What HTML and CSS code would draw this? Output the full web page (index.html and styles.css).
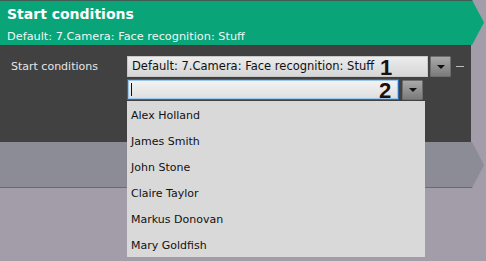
FILE: index.html
```html
<!DOCTYPE html>
<html lang="en">
<head>
  <meta charset="UTF-8">
  <title>Start conditions</title>
  <link rel="stylesheet" href="styles.css">
</head>
<body>
  <div class="header">
    <div class="title">Start conditions</div>
    <div class="subtitle">Default: 7.Camera: Face recognition: Stuff</div>
  </div>

  <div class="panel">
    <div class="row">
      <span class="label">Start conditions</span>
      <div class="combo combo-main">Default: 7.Camera: Face recognition: Stuff</div>
      <button class="drop"><span class="tri"></span></button>
      <span class="dash"></span>
      <span class="mark mark-1">1</span>
    </div>
    <div class="row row-edit">
      <div class="combo combo-edit"><span class="caret"></span></div>
      <button class="drop drop-edit"><span class="tri"></span></button>
      <span class="mark mark-2">2</span>
    </div>

    <ul class="list">
      <li>Alex Holland</li>
      <li>James Smith</li>
      <li>John Stone</li>
      <li>Claire Taylor</li>
      <li>Markus Donovan</li>
      <li>Mary Goldfish</li>
    </ul>
  </div>

  <div class="next"></div>
</body>
</html>
```

FILE: styles.css
```css
body {
  margin: 0;
  background: #a39ca9;
  font-family: "DejaVu Sans", Verdana, sans-serif;
  width: 486px;
  height: 261px;
  overflow: hidden;
}
.header {
  width: 484px;
  height: 45px;
  box-sizing: border-box;
  border-top: 1px solid #3f5a50;
  background: #0aa479;
  padding: 4px 7px 0;
  color: #fff;
  clip-path: polygon(0 0, 472px 0, 484px 50%, 472px 100%, 0 100%);
}
.title {
  font-size: 14px;
  font-weight: bold;
  line-height: 18px;
}
.subtitle {
  font-size: 11.3px;
  line-height: 14px;
  margin-top: 7px;
  color: #eef8f4;
}
.panel {
  position: relative;
  width: 471px;
  height: 97px;
  background: #414141;
  border-top: 1px solid #3a3a3a;
  box-sizing: border-box;
  padding-top: 10px;
}
.row {
  position: relative;
  display: flex;
  align-items: center;
  height: 21px;
}
.row-edit {
  margin-top: 2px;
  padding-left: 127px;
}
.label {
  width: 116px;
  padding-left: 11px;
  font-size: 11px;
  color: #e6e6e6;
}
.combo {
  height: 21px;
  box-sizing: border-box;
  font-size: 11.5px;
  line-height: 19px;
  padding-left: 4px;
  color: #111;
  white-space: nowrap;
}
.combo-main {
  width: 301px;
  border: 1px solid #c8c8c8;
  background: linear-gradient(#ececec, #d6d6d6);
}
.combo-edit {
  position: relative;
  width: 272px;
  border: 1px solid #2a6cb0;
  background: linear-gradient(#f4f4f4, #dedede);
  box-shadow: inset 0 0 0 1px #9cc6ea;
}
.caret {
  position: absolute;
  left: 3px;
  top: 3px;
  width: 1px;
  height: 13px;
  background: #111;
}
.drop {
  display: flex;
  align-items: center;
  justify-content: center;
  width: 21px;
  height: 21px;
  margin-left: 2px;
  padding: 0;
  border: 1px solid #6e6e6e;
  border-radius: 1px;
  background: linear-gradient(#a9a9a9, #7b7b7b);
}
.drop-edit {
  margin-left: 3px;
  height: 20px;
}
.tri {
  width: 0;
  height: 0;
  border-left: 4px solid transparent;
  border-right: 4px solid transparent;
  border-top: 4px solid #111;
}
.dash {
  width: 8px;
  height: 1px;
  margin-left: 5px;
  background: #bdbdbd;
}
.mark {
  position: absolute;
  font-family: "Liberation Sans", Arial, sans-serif;
  font-weight: bold;
  font-size: 22px;
  line-height: 17px;
  color: #1a1010;
}
.mark-1 {
  left: 380px;
  top: 3px;
}
.mark-2 {
  left: 379px;
  top: 3px;
}
.list {
  position: absolute;
  left: 127px;
  top: 55px;
  z-index: 2;
  width: 298px;
  margin: 0;
  padding: 0;
  list-style: none;
  background: #d9d9d9;
}
.list li {
  height: 22px;
  line-height: 22px;
  padding-top: 4px;
  padding-left: 4px;
  font-size: 11px;
  color: #111;
}
.next {
  width: 484px;
  height: 46px;
  box-sizing: border-box;
  background: #8b8c95;
  border-bottom: 1px solid #6c6a74;
  clip-path: polygon(0 0, 472px 0, 484px 50%, 472px 100%, 0 100%);
}
```
